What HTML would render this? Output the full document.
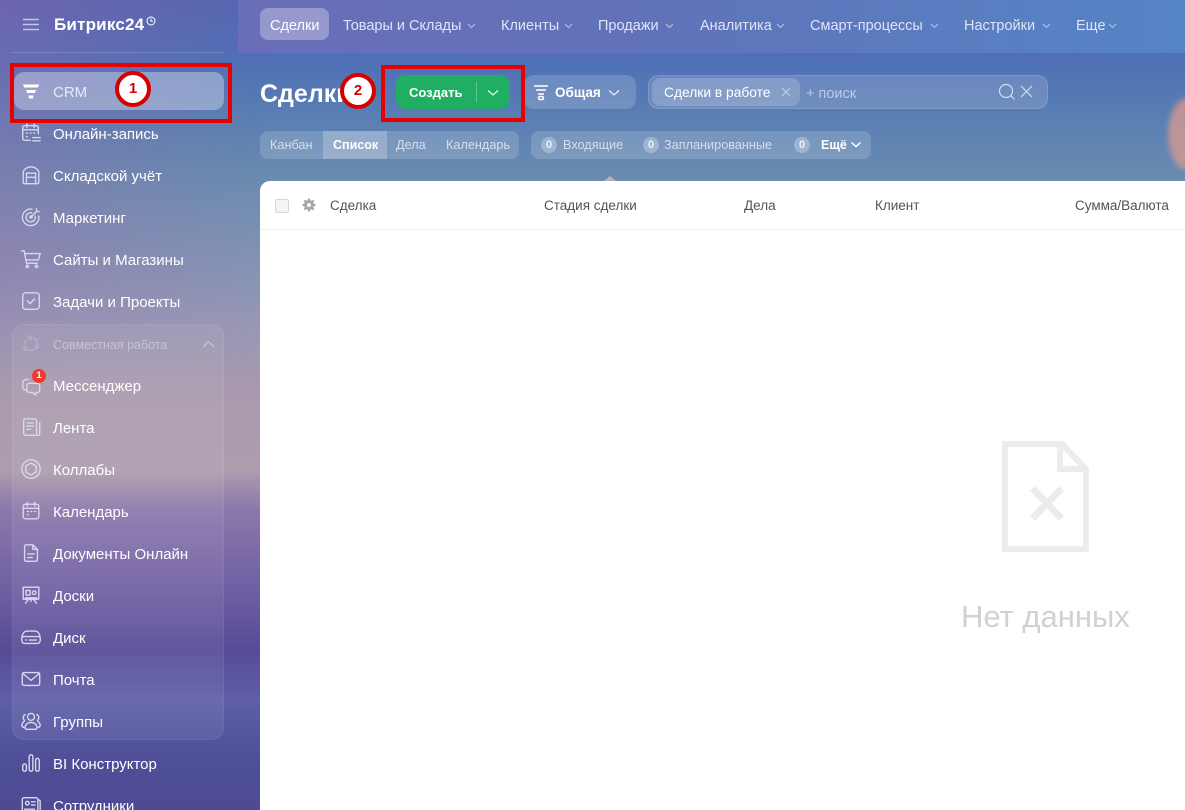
<!DOCTYPE html>
<html lang="ru"><head><meta charset="utf-8"><title>Сделки</title>
<style>
html,body{margin:0;padding:0;width:1185px;height:810px;overflow:hidden}
body{position:relative;font-family:"Liberation Sans","Noto Sans CJK SC",sans-serif;color:#fff;
background:linear-gradient(180deg,#5566b0 0,#4f70b6 60px,#5a7fb3 120px,#6a8cb0 180px,#8393b4 260px,#9797b5 320px,#a899ae 390px,#ad9dae 470px,#8b78ab 510px,#6f5ea3 590px,#574b96 650px,#5f5fa8 700px,#4f4f98 760px,#4c4b94 810px)}
.abs,.t{position:absolute}
.t{white-space:nowrap;line-height:18px}
#tint{position:absolute;left:0;top:0;width:300px;height:470px;background:linear-gradient(90deg,rgba(165,100,170,.3),rgba(165,100,170,0) 260px);-webkit-mask-image:linear-gradient(180deg,#000 55%,transparent 80%)}
#top{position:absolute;left:238px;top:0;width:947px;height:53px;background:linear-gradient(90deg,#6a6db8,#6073ba 45%,#5584c5)}
.side{font-size:15px;left:53px;color:#fff;margin-top:4px}
.ic{position:absolute;left:20px;width:22px;height:22px;margin-top:1px;fill:none;stroke:#d8d8f0;stroke-width:1.5;stroke-linecap:round;stroke-linejoin:round}
.nav{font-size:14.5px;top:17px;color:#dfe5f6}
.chev{position:absolute;width:9px;height:6px;fill:none;stroke:#b9c5e6;stroke-width:1}
.pill{position:absolute;background:rgba(255,255,255,.16)}
.col{font-size:13.5px;top:197px;color:#4f5459}
.tab{font-size:12.7px;top:136px;color:#d6dfee}
.cnt{position:absolute;width:16px;height:16px;border-radius:50%;background:rgba(255,255,255,.28);color:#eef3fa;font-size:11px;font-weight:bold;line-height:16px;text-align:center;top:137px}
.box{position:absolute;border:4px solid #e60000;box-sizing:border-box}
.num{position:absolute;width:36px;height:36px;box-sizing:border-box;border-radius:50%;border:4px solid #d40000;background:#fff;color:#d40000;font-size:15px;font-weight:bold;line-height:28px;text-align:center}
</style></head><body>
<div id="tint"></div><div id="top"></div>
<div class="abs" style="left:1168px;top:98px;width:40px;height:72px;border-radius:50%;background:#d59a90;opacity:.8;filter:blur(3px)"></div>
<div class="abs" style="left:604px;top:176px;width:0;height:0;border-left:6px solid transparent;border-right:6px solid transparent;border-bottom:5px solid #b9b3ae"></div>

<svg class="abs" style="left:23px;top:18px" width="16" height="13" fill="none" stroke="#c3c6e6" stroke-width="1.4"><path d="M0 1.500H16M0 6.500H16M0 11.500H16"/></svg>
<div class="t" style="left:54px;top:13px;font-size:17px;font-weight:bold;line-height:24px;letter-spacing:.2px">Битрикс24</div>
<svg class="abs" style="left:146px;top:16px" width="10" height="10" fill="none" stroke="#fff" stroke-width="1"><circle cx="5" cy="5" r="4"/><path d="M5 2.600V5.300H7"/></svg>
<div class="abs" style="left:12px;top:52px;width:212px;height:1px;background:rgba(255,255,255,.16)"></div>

<div class="abs" style="left:14px;top:72px;width:210px;height:38px;border-radius:10px;background:rgba(255,255,255,.33)"></div>
<div class="abs" style="left:12px;top:324px;width:212px;height:416px;box-sizing:border-box;border-radius:12px;background:rgba(255,255,255,.07);border:1px solid rgba(255,255,255,.05)"></div>

<svg class="abs" style="left:22px;top:84px" width="18" height="16" fill="#fff"><path d="M1 0.500H17L16 3.500H2ZM4 6H14L13 9H5ZM6.500 11.500H11.500L11 14.500H7Z"/></svg>
<div class="t side" style="top:80px;color:#e8ebf8">CRM</div>

<svg class="ic" style="top:121px" viewBox="0 0 24 24"><path d="M11 20H5a2 2 0 0 1-2-2V6a2 2 0 0 1 2-2h13a2 2 0 0 1 2 2v7M7.500 2v4M15.500 2v4M3 8.500H20M7 12h1M11 12h1M15 12h1M7 16h1M14 17h8M14 20.500h8"/></svg>
<div class="t side" style="top:122px">Онлайн-запись</div>
<svg class="ic" style="top:163px" viewBox="0 0 24 24"><path d="M3.500 20V9.500C3.500 6 8 3 12 3s8.500 3 8.500 6.500V20a1.500 1.500 0 0 1-1.500 1.500H5A1.500 1.500 0 0 1 3.500 20ZM7 21.500V10h10v11.500M7 14.500h10"/></svg>
<div class="t side" style="top:164px">Складской учёт</div>
<svg class="ic" style="top:205px" viewBox="0 0 24 24"><path d="M13 3.500A9 9 0 1 0 20.500 11M13 7.500A5 5 0 1 0 16.500 11M12 12l6-6M18 6V3M18 6h3"/><circle cx="12" cy="12" r="1.200"/></svg>
<div class="t side" style="top:206px">Маркетинг</div>
<svg class="ic" style="top:247px" viewBox="0 0 24 24"><path d="M1.500 3H4.500L7 16.500H19M5 6H22L20 13H6.500"/><circle cx="8" cy="20" r="1.300"/><circle cx="18" cy="20" r="1.300"/></svg>
<div class="t side" style="top:248px">Сайты и Магазины</div>
<svg class="ic" style="top:289px" viewBox="0 0 24 24"><rect x="3" y="3" width="18" height="18" rx="3"/><path d="M8 12l3 3L16 9.500"/></svg>
<div class="t side" style="top:290px">Задачи и Проекты</div>

<svg class="ic" style="top:332px;stroke:#b7b3cc;stroke-width:1.300" viewBox="0 0 24 24"><path d="M5.500 13a7 7 0 0 1 2-6M15 5.500A7 7 0 0 1 19 12M16 18a7 7 0 0 1-7 .5"/><circle cx="11" cy="5" r="1.800"/><circle cx="6" cy="17" r="1.800"/><circle cx="18.500" cy="15" r="1.800"/></svg>
<div class="t" style="left:53px;top:336px;font-size:12.5px;color:#c7c3d6">Совместная работа</div>
<svg class="abs" style="left:202px;top:340px" width="13" height="8" fill="none" stroke="#c7c3d6" stroke-width="1.300"><path d="M1 7L6.500 1.500L12 7"/></svg>

<svg class="ic" style="top:374px" viewBox="0 0 24 24"><path d="M9 5H7C4.500 5 3 6.500 3 9v4c0 2 1.500 3.500 3.500 3.500M10 9h9a2.500 2.500 0 0 1 2.500 2.500v5a2.500 2.500 0 0 1-2.500 2.500h-1.500l-.5 3-3.500-3H10a2.500 2.500 0 0 1-2.500-2.500v-5A2.500 2.500 0 0 1 10 9Z"/></svg>
<div class="abs" style="left:32px;top:369px;width:14px;height:14px;border-radius:50%;background:#ee3b2f;color:#fff;font-size:9.5px;font-weight:bold;line-height:14px;text-align:center">1</div>
<div class="t side" style="top:374px">Мессенджер</div>
<svg class="ic" style="top:415px" viewBox="0 0 24 24"><path d="M18 19V5a2 2 0 0 0-2-2H6a2 2 0 0 0-2 2v14a2 2 0 0 0 2 2h14a1.500 1.500 0 0 0 1.500-1.500V7M7.500 7.500h7M7.500 11h7M7.500 14.500h4"/></svg>
<div class="t side" style="top:416px">Лента</div>
<svg class="ic" style="top:457px" viewBox="0 0 24 24"><circle cx="12" cy="12" r="10"/><path d="M12 5.500l5.700 3.200v6.600L12 18.500l-5.700-3.200V8.700Z"/></svg>
<div class="t side" style="top:458px">Коллабы</div>
<svg class="ic" style="top:499px" viewBox="0 0 24 24"><rect x="3.500" y="4.500" width="17" height="16" rx="2.500"/><path d="M8 2.500v4M16 2.500v4M3.500 9H20.500M8 12.500h1M12 12.500h1M16 12.500h1M8 16h1"/></svg>
<div class="t side" style="top:500px">Календарь</div>
<svg class="ic" style="top:541px" viewBox="0 0 24 24"><path d="M5 5a2 2 0 0 1 2-2h7l5 5v11a2 2 0 0 1-2 2H7a2 2 0 0 1-2-2ZM14 3v5h5M8.500 13h7M8.500 17h5"/></svg>
<div class="t side" style="top:542px">Документы Онлайн</div>
<svg class="ic" style="top:583px" viewBox="0 0 24 24"><path d="M3.500 3.500h17v13h-17ZM6 17v-2h12v2M9 17l-3 4M15 17l3 4M12 17v2"/><rect x="6.500" y="7" width="4.500" height="5"/><circle cx="15.500" cy="9.500" r="2"/></svg>
<div class="t side" style="top:584px">Доски</div>
<svg class="ic" style="top:625px" viewBox="0 0 24 24"><path d="M2 14c0-6 3-8.500 6-8.500h8c3 0 6 2.500 6 8.500v2a3 3 0 0 1-3 3H5a3 3 0 0 1-3-3ZM2.500 11.500h19M6 15.300h1M10 15.300h8"/></svg>
<div class="t side" style="top:626px">Диск</div>
<svg class="ic" style="top:667px" viewBox="0 0 24 24"><rect x="2.500" y="5" width="19" height="14" rx="2"/><path d="M3 6l9 7.500L21 6"/></svg>
<div class="t side" style="top:668px">Почта</div>
<svg class="ic" style="top:709px" viewBox="0 0 24 24"><circle cx="12" cy="7.500" r="3.800"/><path d="M5.500 19.500c0-4 3-6 6.500-6s6.500 2 6.500 6c0 1-1 1.500-2 1.500h-9c-1 0-2-.5-2-1.500ZM5.500 5A4 4 0 0 0 5 11.500L3 14c-1.500 2-1.500 4.500 1 5M18.500 5a4 4 0 0 1 .5 6.500l2 2.500c1.500 2 1.500 4.500-1 5"/></svg>
<div class="t side" style="top:710px">Группы</div>
<svg class="ic" style="top:751px" viewBox="0 0 24 24"><rect x="3" y="13" width="4" height="8" rx="2"/><rect x="10" y="3" width="4" height="18" rx="2"/><rect x="17" y="7" width="4" height="14" rx="2"/></svg>
<div class="t side" style="top:752px">BI Конструктор</div>
<svg class="ic" style="top:793px" viewBox="0 0 24 24"><rect x="2.500" y="4" width="17" height="16" rx="2"/><path d="M19.500 6.500h1a1.500 1.500 0 0 1 1.500 1.500v9.500M12.500 8.500h4M12.500 12h4M5 16.500h11"/><circle cx="8" cy="10" r="2"/></svg>
<div class="t side" style="top:794px">Сотрудники</div>

<div class="abs" style="left:260px;top:8px;width:69px;height:32px;border-radius:8px;background:rgba(255,255,255,.3)"></div>
<div class="t nav" style="left:270px;color:#fff">Сделки</div>
<div class="t nav" style="left:343px">Товары и Склады</div><svg class="chev" style="left:467px;top:23px"><path d="M1 1l3.500 3.500L8 1"/></svg>
<div class="t nav" style="left:501px">Клиенты</div><svg class="chev" style="left:564px;top:23px"><path d="M1 1l3.500 3.500L8 1"/></svg>
<div class="t nav" style="left:598px">Продажи</div><svg class="chev" style="left:665px;top:23px"><path d="M1 1l3.500 3.500L8 1"/></svg>
<div class="t nav" style="left:700px">Аналитика</div><svg class="chev" style="left:776px;top:23px"><path d="M1 1l3.500 3.500L8 1"/></svg>
<div class="t nav" style="left:810px">Смарт-процессы</div><svg class="chev" style="left:930px;top:23px"><path d="M1 1l3.500 3.500L8 1"/></svg>
<div class="t nav" style="left:964px">Настройки</div><svg class="chev" style="left:1042px;top:23px"><path d="M1 1l3.500 3.500L8 1"/></svg>
<div class="t nav" style="left:1076px">Еще</div><svg class="chev" style="left:1108px;top:23px"><path d="M1 1l3.500 3.500L8 1"/></svg>

<div class="t" style="left:260px;top:78px;font-size:25px;font-weight:bold;line-height:32px">Сделки</div>
<div class="abs" style="left:396px;top:75px;width:114px;height:34px;border-radius:10px;background:#1fae62"></div>
<div class="t" style="left:409px;top:84px;font-size:13px;font-weight:bold">Создать</div>
<div class="abs" style="left:476px;top:82px;width:1px;height:20px;background:rgba(255,255,255,.3)"></div>
<svg class="abs" style="left:487px;top:89px" width="12" height="8" fill="none" stroke="#e8fff2" stroke-width="1.200"><path d="M1 1.500l5 4.500 5-4.500"/></svg>
<div class="pill" style="left:524px;top:75px;width:112px;height:34px;border-radius:10px"></div>
<svg class="abs" style="left:532px;top:84px" width="18" height="17" fill="none" stroke="#fff" stroke-width="1.500"><path d="M2 2H16M4 6H14M6 10H12"/><rect x="6.500" y="12.500" width="5" height="3" rx="1.500"/></svg>
<div class="t" style="left:555px;top:84px;font-size:13.5px;font-weight:bold">Общая</div>
<svg class="abs" style="left:608px;top:89px" width="12" height="8" fill="none" stroke="#eaf0fa" stroke-width="1.200"><path d="M1 1.500l5 4.500 5-4.500"/></svg>

<div class="abs" style="left:648px;top:75px;width:400px;height:34px;box-sizing:border-box;border-radius:10px;background:rgba(255,255,255,.14);border:1px solid rgba(255,255,255,.12)"></div>
<div class="abs" style="left:652px;top:78px;width:148px;height:28px;border-radius:8px;background:rgba(255,255,255,.17)"></div>
<div class="t" style="left:664px;top:84px;font-size:13.8px;color:#fff">Сделки в работе</div>
<svg class="abs" style="left:781px;top:87px" width="10" height="10" fill="none" stroke="#c8d4ea" stroke-width="1"><path d="M1 1l8 8M9 1l-8 8"/></svg>
<div class="t" style="left:806px;top:85px;font-size:14.5px;color:#bccbe4">+ поиск</div>
<svg class="abs" style="left:998px;top:83px" width="18" height="18" fill="none" stroke="#d3dded" stroke-width="1.200"><circle cx="8" cy="8" r="6.500"/><path d="M12.500 12.500l4 4"/></svg>
<svg class="abs" style="left:1020px;top:85px" width="13" height="13" fill="none" stroke="#d3dded" stroke-width="1.200"><path d="M1 1l11 11M12 1L1 12"/></svg>

<div class="pill" style="left:260px;top:131px;width:259px;height:28px;border-radius:8px"></div>
<div class="abs" style="left:323px;top:131px;width:64px;height:28px;background:rgba(255,255,255,.22)"></div>
<div class="t tab" style="left:270px">Канбан</div>
<div class="t tab" style="left:333px;font-size:12.5px;font-weight:bold;color:#fff">Список</div>
<div class="t tab" style="left:396px">Дела</div>
<div class="t tab" style="left:446px">Календарь</div>

<div class="pill" style="left:531px;top:131px;width:340px;height:28px;border-radius:8px"></div>
<div class="cnt" style="left:541px">0</div>
<div class="t tab" style="left:563px">Входящие</div>
<div class="cnt" style="left:643px">0</div>
<div class="t tab" style="left:664px">Запланированные</div>
<div class="cnt" style="left:794px">0</div>
<div class="t tab" style="left:821px;font-size:12.5px;font-weight:bold;color:#fff">Ещё</div>
<svg class="abs" style="left:850px;top:141px" width="12" height="8" fill="none" stroke="#fff" stroke-width="1.500"><path d="M1.500 1.500l4.500 4 4.500-4"/></svg>

<div class="abs" style="left:260px;top:181px;width:925px;height:629px;background:#fff;border-radius:10px 0 0 0"></div>
<div class="abs" style="left:260px;top:229px;width:925px;height:1px;background:#eef0f1"></div>
<div class="abs" style="left:275px;top:199px;width:14px;height:14px;box-sizing:border-box;border:1px solid #d5d8da;border-radius:2px;background:#f3f4f5"></div>
<svg class="abs" style="left:302px;top:198px" width="14" height="14" viewBox="0 0 14 14" fill="none" stroke="#a3a8ad"><circle cx="7" cy="7" r="3.500" stroke-width="3"/><path d="M7 .5v2.500M7 11v2.500M.5 7H3M11 7h2.500M2.400 2.400l1.800 1.800M9.800 9.800l1.800 1.800M11.600 2.400L9.800 4.200M4.200 9.800l-1.800 1.800" stroke-width="2.200"/></svg>
<div class="t col" style="left:330px">Сделка</div>
<div class="t col" style="left:544px">Стадия сделки</div>
<div class="t col" style="left:744px">Дела</div>
<div class="t col" style="left:875px">Клиент</div>
<div class="t col" style="left:1075px">Сумма/Валюта</div>

<svg class="abs" style="left:1002px;top:441px" width="87" height="111" viewBox="0 0 87 111" fill="none" stroke="#eaecee" stroke-width="6"><path d="M3 3H60L84 28V108H3Z"/><path d="M58 3V28H84"/><path d="M30.500 47.500L59.500 77.500M59.500 47.500L30.500 77.500" stroke-width="7"/></svg>
<div class="t" style="left:961px;top:599px;font-size:31px;line-height:36px;color:#ced2d5">Нет данных</div>

<div class="box" style="left:10px;top:63px;width:222px;height:60px"></div>
<div class="num" style="left:115px;top:71px">1</div>
<div class="num" style="left:340px;top:73px">2</div>
<div class="box" style="left:381px;top:65px;width:144px;height:57px"></div>
</body></html>
